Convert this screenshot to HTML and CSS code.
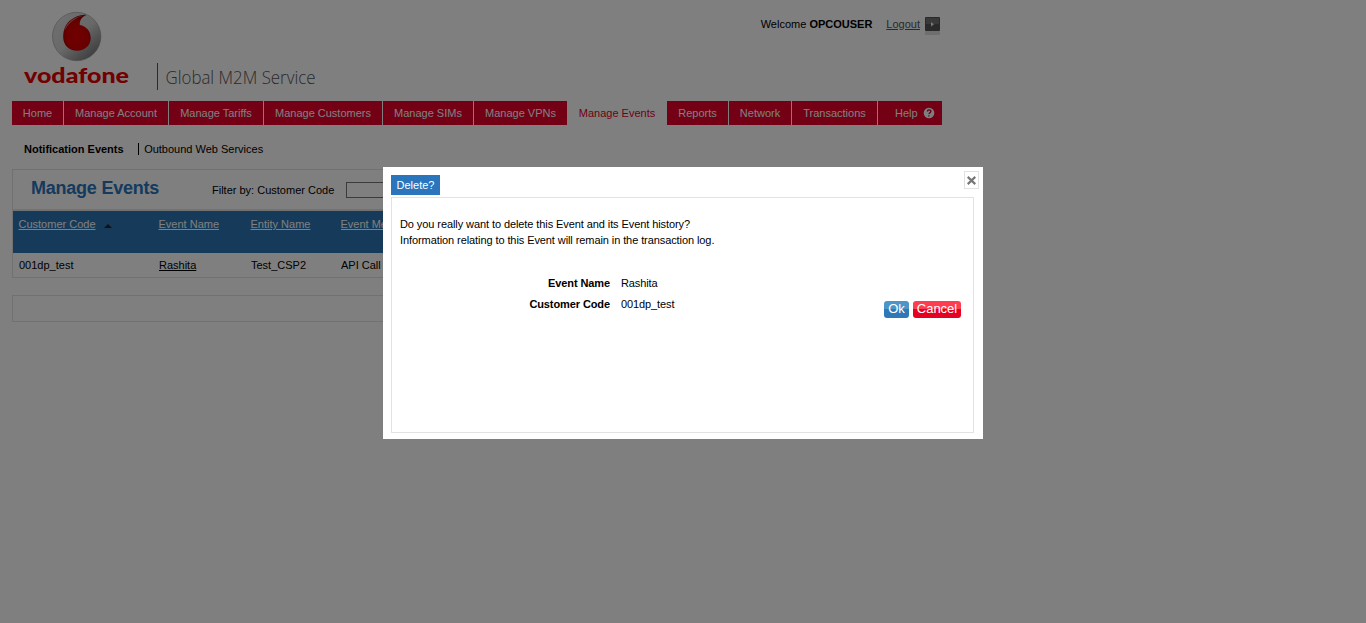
FILE: index.html
```html
<!DOCTYPE html>
<html lang="en">
<head>
<meta charset="utf-8">
<title>Global M2M Service - Manage Events</title>
<link rel="stylesheet" href="styles.css">
</head>
<body>
<div class="page">
  <header class="header">
    <svg class="logo" width="320" height="89" viewBox="12 6 320 89">
      <defs>
        <linearGradient id="ball" x1=".15" y1=".1" x2=".85" y2=".9">
          <stop offset="0" stop-color="#dedede"/><stop offset=".5" stop-color="#d2d2d2"/><stop offset="1" stop-color="#7c7c7c"/>
        </linearGradient>
        <radialGradient id="drop" cx=".5" cy=".6" r=".55">
          <stop offset="0" stop-color="#e20000"/><stop offset=".75" stop-color="#d20000"/><stop offset="1" stop-color="#960000"/>
        </radialGradient>
      </defs>
      <circle cx="76.700" cy="36.500" r="24.200" fill="url(#ball)" stroke="#999" stroke-width=".6"/>
      <path d="M86.500 14.900C82 14 75 16.400 70 20.600C65.500 24.500 63.200 30 63.200 37C63.200 45 69 50.800 77 50.800C85 50.800 90.700 45 90.700 38C90.700 31 86 26.300 79.800 25.100C79.400 20.500 81.500 16.700 86.500 14.900Z" fill="url(#drop)"/>
      <path d="M84 15.500C75.500 16.300 66 22.500 64.300 31C68.500 23 74.500 18 84 15.500Z" fill="#f0a0a0" opacity=".7"/>
      <text class="brand" x="24" y="83" textLength="105" lengthAdjust="spacingAndGlyphs">vodafone</text>
      <rect x="157" y="63" width="1" height="27" fill="#555"/>
      <text class="product" x="165.500" y="84" textLength="150" lengthAdjust="spacingAndGlyphs">Global M2M Service</text>
    </svg>
    <div class="user">
      <span class="welcome">Welcome <b>OPCOUSER</b></span>
      <a class="logout">Logout</a>
      <svg class="logout-icon" width="15" height="19" viewBox="0 0 15 19">
        <rect width="15" height="14" rx="1" fill="#555"/>
        <path d="M1 1h13v6h-13z" fill="#727272"/>
        <path d="M6 5l3 2.200-3 2.200z" fill="#eee"/>
        <rect y="14" width="15" height="4" fill="#dedede"/>
      </svg>
    </div>
  </header>
  <nav class="nav">
    <a class="tab w51">Home</a><a class="tab w104">Manage Account</a><a class="tab w94">Manage Tariffs</a><a class="tab w118">Manage Customers</a><a class="tab w90">Manage SIMs</a><a class="tab w93">Manage VPNs</a><a class="tab active">Manage Events</a><a class="tab w61">Reports</a><a class="tab w62">Network</a><a class="tab w85">Transactions</a><a class="tab help">Help
      <svg width="12" height="12" viewBox="0 0 12 12"><circle cx="6" cy="6" r="5.300" fill="#fff"/><path d="M4.400 4.600C4.400 2.300 8 2.400 7.900 4.400C7.800 5.600 6.200 5.700 6 7M5.900 8.200L5.800 9.500" fill="none" stroke="#b00020" stroke-width="1.300"/></svg></a>
  </nav>
  <div class="subnav"><b>Notification Events</b><span class="sub">Outbound Web Services</span></div>
  <main class="panel">
    <div class="filter"><h1>Manage Events</h1><label>Filter by: Customer Code</label><span class="field"></span></div>
    <div class="row head">
      <span><u>Customer Code</u><i class="sort"></i></span><span><u>Event Name</u></span><span><u>Entity Name</u></span><span class="method"><u>Event Method</u></span>
    </div>
    <div class="row data"><span>001dp_test</span><span><u>Rashita</u></span><span>Test_CSP2</span><span>API Call</span></div>
  </main>
  <div class="footer-box"></div>
</div>
<div class="overlay">
  <section class="dialog">
    <div class="dialog-top">
      <span class="dialog-title">Delete?</span>
      <span class="close"><svg width="9" height="9" viewBox="0 0 9 9"><path d="M.7 .9L8.300 8.100M8.300 .9L.7 8.100" stroke="#777" stroke-width="2.200"/></svg></span>
    </div>
    <div class="dialog-body">
      <p>Do you really want to delete this Event and its Event history?<br>Information relating to this Event will remain in the transaction log.</p>
      <dl><dt>Event Name</dt><dd>Rashita</dd><dt>Customer Code</dt><dd>001dp_test</dd></dl>
      <div class="actions"><button class="ok">Ok</button><button class="cancel">Cancel</button></div>
    </div>
  </section>
</div>
</body>
</html>
```
FILE: styles.css
```css
* { box-sizing: border-box; }
body { margin: 0; height: 623px; overflow: hidden; background: #fff; color: #000; font: 11px/16px "Liberation Sans", Arial, sans-serif; }
.page { width: 942px; padding: 6px 0 0 12px; }
.header { display: flex; justify-content: space-between; height: 95px; }
.logo { display: block; overflow: visible; }
.brand { font: 900 21.5px Lato, sans-serif; fill: #e60000; }
.product { font: 300 19px "Open Sans", sans-serif; fill: #555; }
.user { display: flex; align-items: flex-start; padding: 11px 2px 0 0; white-space: nowrap; }
.user .welcome, .user .logout { line-height: 15px; }
.logout { margin: 0 5px 0 14px; color: #555; text-decoration: underline; }
.nav { display: flex; gap: 1px; height: 24px; }
.tab { background: #e60029; color: #fff; text-align: center; line-height: 24px; height: 24px; flex: none; white-space: nowrap; }
.w51 { width: 51px; } .w104 { width: 104px; } .w94 { width: 94px; } .w118 { width: 118px; } .w90 { width: 90px; }
.w93 { width: 93px; } .w61 { width: 61px; } .w62 { width: 62px; } .w85 { width: 85px; }
.tab.active { width: 98px; background: #fff; color: #e60029; }
.tab.help { display: flex; align-items: center; width: 64px; padding-left: 17px; gap: 5px; }
.subnav { display: flex; align-items: center; height: 44px; padding: 4px 0 0 12px; }
.sub { margin-left: 14px; padding-left: 5.5px; border-left: 1px solid #000; line-height: 12px; }
.panel { height: 109px; border: 1px solid #e2e2e2; }
.filter { display: flex; height: 41px; border-bottom: 2px solid #e2e2e2; white-space: nowrap; }
h1 { width: 199px; margin: 0; padding: 8px 0 0 18px; font-size: 18px; line-height: 20px; letter-spacing: -.23px; color: #2a75bb; }
.filter label { width: 134px; padding-top: 12px; }
.field { width: 130px; height: 16px; margin-top: 12px; border: 1px solid #777; }
.row { display: grid; grid-template-columns: 140px 92px 90px 1fr; padding-left: 6px; }
.head { height: 42px; padding-top: 5px; padding-left: 5.5px; background: #2a75b4; color: #fff; }
.method { width: 43px; overflow: hidden; white-space: nowrap; }
.data { padding-top: 4px; }
.sort { display: inline-block; margin-left: 8px; border: 4px solid transparent; border-top: 0; border-bottom-color: #222; }
.footer-box { height: 27px; margin-top: 17px; border: 1px solid #e2e2e2; }
.overlay { position: fixed; inset: 0; padding: 167px 0 0 383px; background: rgba(0, 0, 0, .5); }
.dialog { width: 600px; height: 272px; padding: 4px 4px 0 8px; background: #fff; }
.dialog-top { display: flex; justify-content: space-between; height: 26px; }
.dialog-title { width: 49px; height: 20px; margin-top: 4px; background: #2a75bb; color: #fff; line-height: 20px; text-align: center; }
.close { display: flex; align-items: center; justify-content: center; width: 15px; height: 18px; border: 1px solid #e2e2e2; }
.dialog-body { width: 583px; height: 236px; padding: 18px 12px 0 8px; border: 1px solid #e2e2e2; }
p { margin: 0; white-space: nowrap; letter-spacing: -.086px; }
dl { display: grid; grid-template-columns: 210px 1fr; column-gap: 11px; row-gap: 5px; margin: 27px 0 0; letter-spacing: -.1px; }
dt { font-weight: bold; text-align: right; } dd { margin: 0; }
.actions { display: flex; justify-content: flex-end; gap: 4px; margin-top: -11px; }
button { height: 17px; padding: 0 0 1px; border: 0; border-radius: 3px; color: #fff; font: 13px/16px "Liberation Sans", Arial, sans-serif; }
.ok { width: 25px; background: linear-gradient(#4c95c9 50%, #2d79b8 50%); }
.cancel { width: 48px; background: linear-gradient(#ff3d50 50%, #e60022 50%); }
```
